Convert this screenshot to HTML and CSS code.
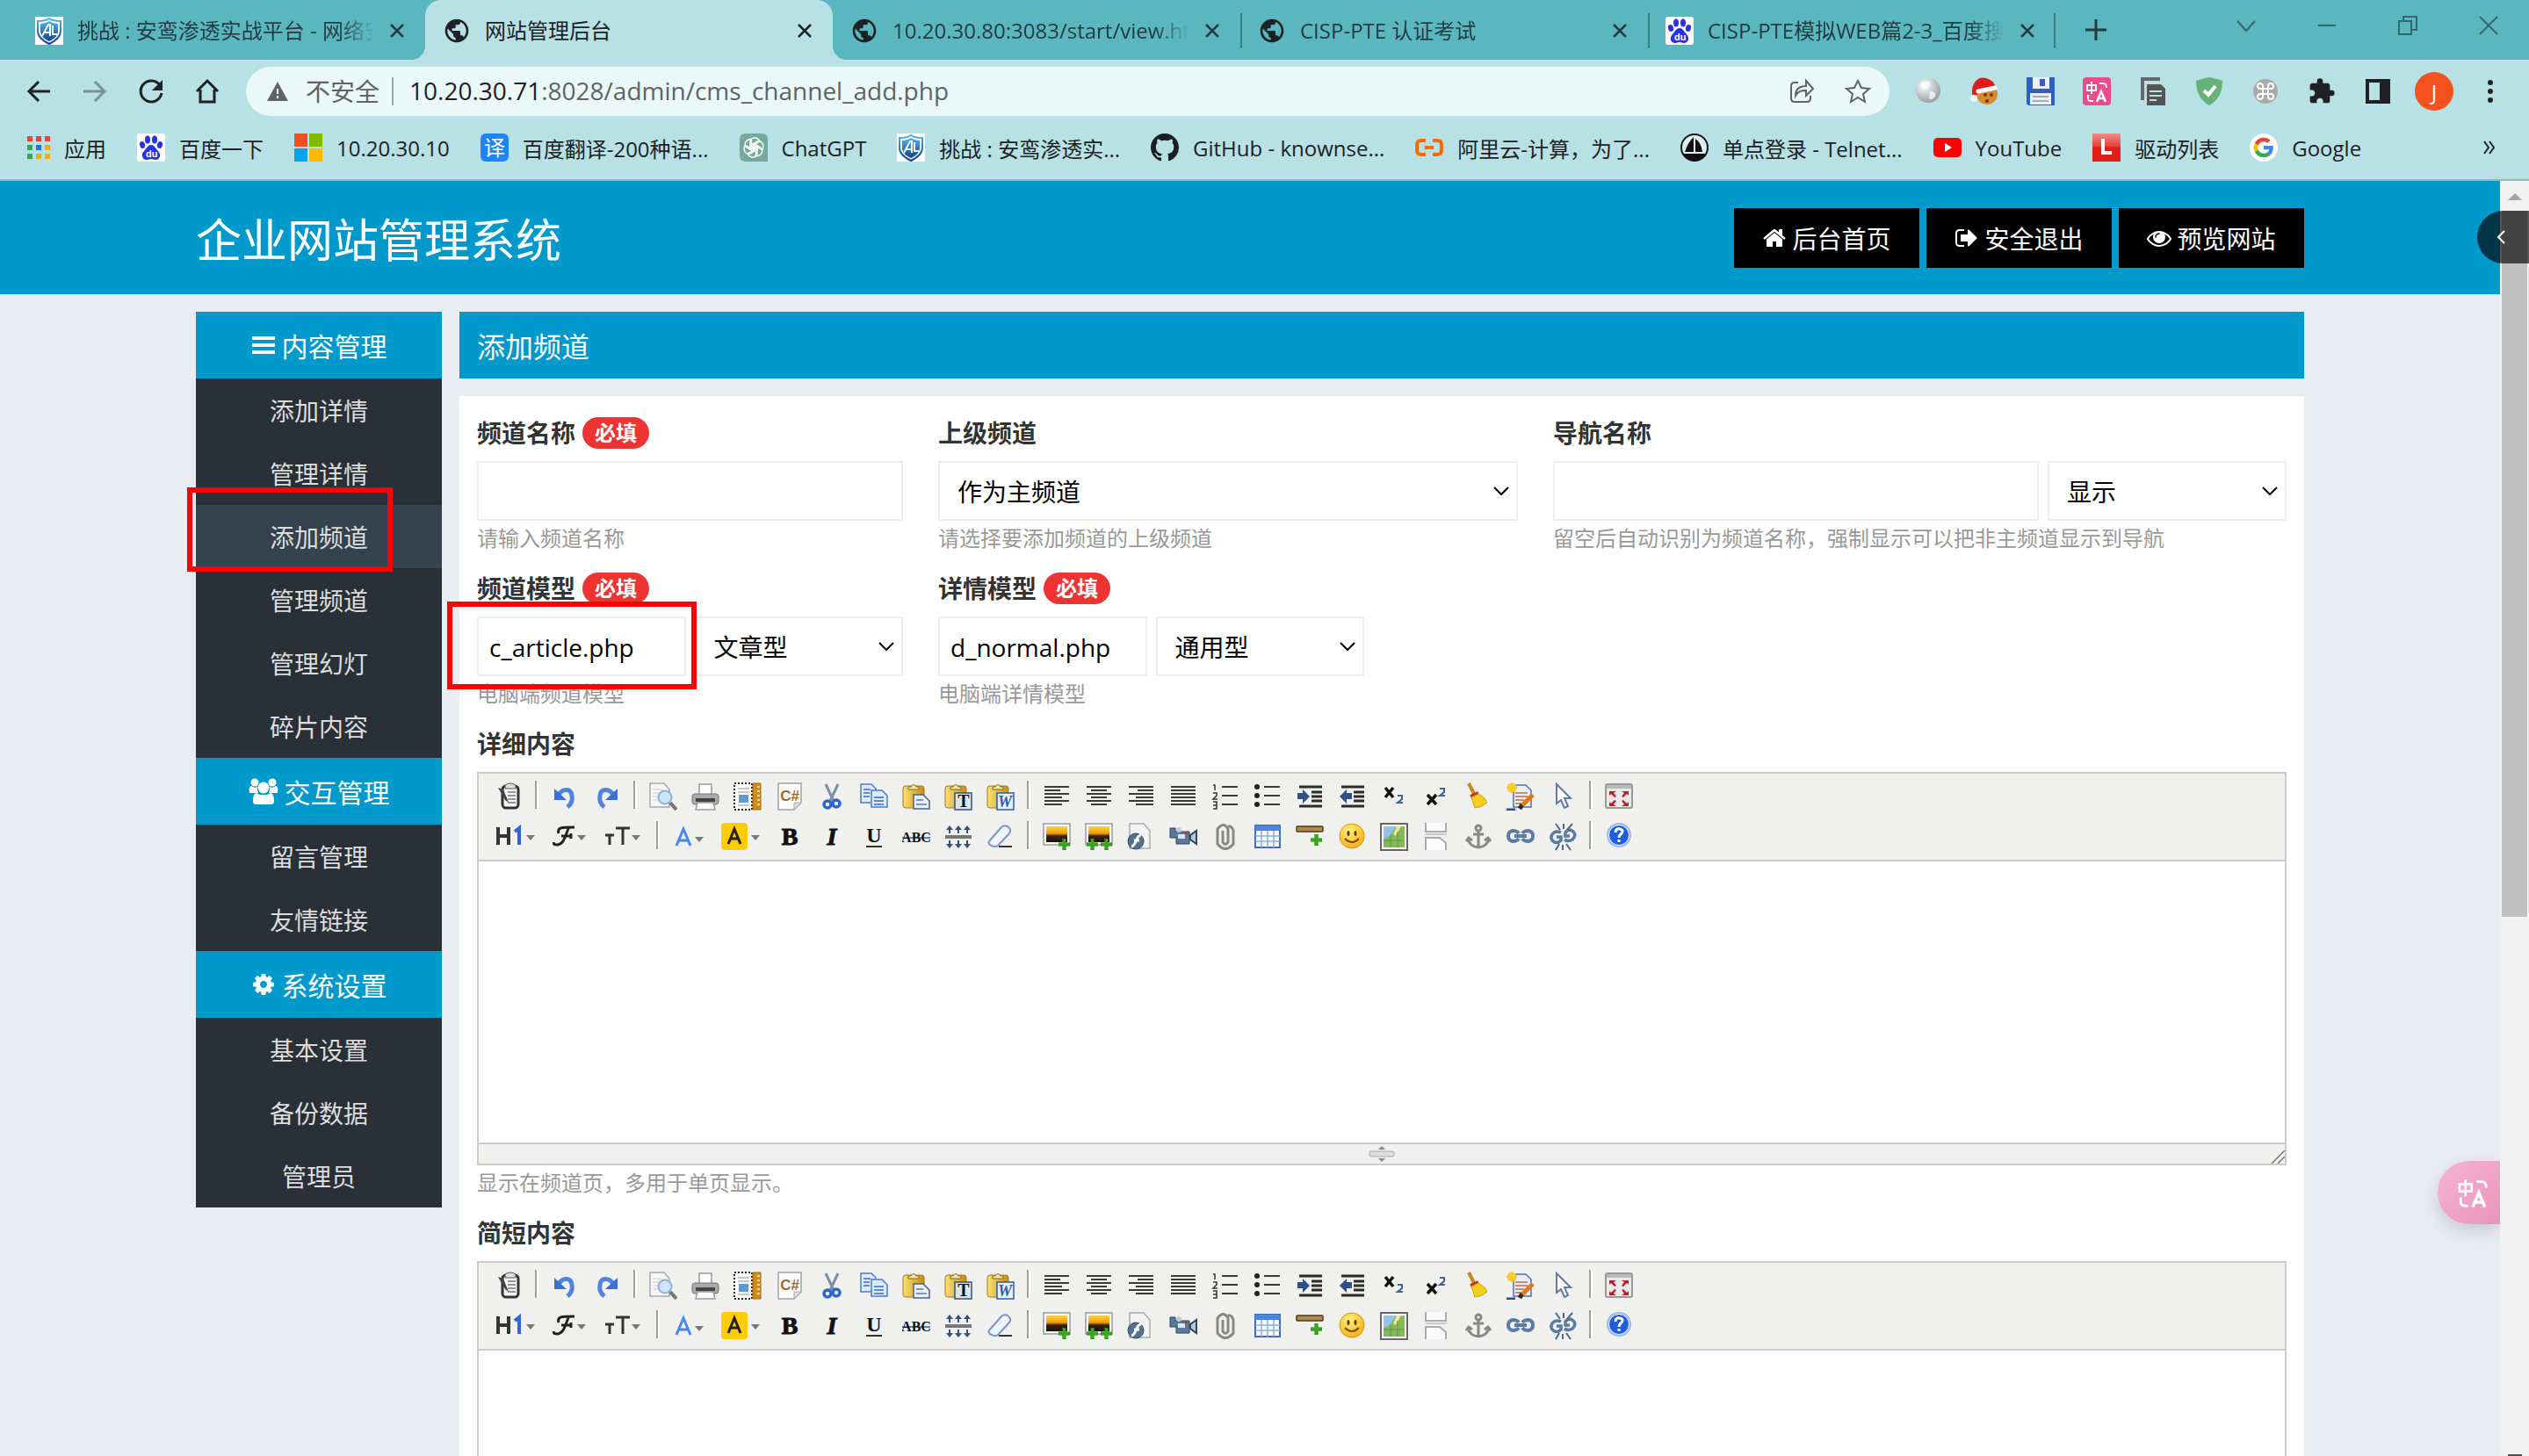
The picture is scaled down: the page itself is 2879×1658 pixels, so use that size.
FILE: index.html
```html
<!DOCTYPE html>
<html lang="zh-CN">
<head>
<meta charset="utf-8">
<title>网站管理后台</title>
<link rel="stylesheet" href="styles.css">
</head>
<body>
<svg class="sprite" aria-hidden="true">
  <defs>
    <linearGradient id="g-blue" x1="0" y1="0" x2="0" y2="1"><stop offset="0" stop-color="#4fb4e6"/><stop offset="1" stop-color="#12408f"/></linearGradient>
    <linearGradient id="g-sky" x1="0" y1="0" x2="0" y2="1"><stop offset="0" stop-color="#ffd23c"/><stop offset=".45" stop-color="#f59a08"/><stop offset=".6" stop-color="#3b2412"/><stop offset="1" stop-color="#1c120a"/></linearGradient>
    <linearGradient id="g-clip" x1="0" y1="0" x2="1" y2="0"><stop offset="0" stop-color="#fbe27a"/><stop offset="1" stop-color="#c88a10"/></linearGradient>
    <radialGradient id="g-face" cx=".4" cy=".3" r=".8"><stop offset="0" stop-color="#fff27a"/><stop offset="1" stop-color="#f5a80c"/></radialGradient>
    <radialGradient id="g-globe" cx=".35" cy=".3" r=".8"><stop offset="0" stop-color="#fff"/><stop offset="1" stop-color="#8e9496"/></radialGradient>
    <linearGradient id="g-red" x1="0" y1="0" x2="0" y2="1"><stop offset="0" stop-color="#f08d88"/><stop offset=".45" stop-color="#e8413a"/><stop offset=".5" stop-color="#e02018"/><stop offset="1" stop-color="#e02018"/></linearGradient>
  </defs>

  <symbol id="shield-logo" viewBox="0 0 32 32"><path fill="#fff" d="M0 0h32v32H0z"/><path fill="none" stroke="url(#g-blue)" stroke-width="2" d="M16 2c4 3 8 3 13 3v11c0 7-5 11-13 15C8 27 3 23 3 16V5c5 0 9 0 13-3z"/><path fill="url(#g-blue)" d="M16 5c3 2 7 3 10 3v8c0 5-3 9-10 12C9 25 6 21 6 16V8c3 0 7-1 10-3z"/><path fill="none" stroke="#fff" stroke-width="2" d="m8 22 7-13h2v13M11 18h6m3-8v10h5"/></symbol>
  <symbol id="globe" viewBox="0 0 24 24"><path fill="#202124" d="M12 2C6.480 2 2 6.480 2 12s4.480 10 10 10 10-4.480 10-10S17.520 2 12 2zm-1 17.930c-3.950-.490-7-3.850-7-7.930 0-.620.080-1.210.210-1.790L9 15v1c0 1.100.900 2 2 2v1.930zm6.900-2.540c-.260-.810-1-1.390-1.900-1.390h-1v-3c0-.550-.450-1-1-1H8v-2h2c.550 0 1-.450 1-1V7h2c1.100 0 2-.900 2-2v-.410c2.930 1.190 5 4.060 5 7.410 0 2.080-.800 3.970-2.100 5.390z"/></symbol>
  <symbol id="baidu" viewBox="0 0 32 32"><rect width="32" height="32" rx="3" fill="#fff"/><g fill="#2932e1"><ellipse cx="12" cy="7" rx="3" ry="4.500"/><ellipse cx="20" cy="7" rx="3" ry="4.500"/><ellipse cx="6" cy="13" rx="3" ry="4" transform="rotate(-15 6 13)"/><ellipse cx="26" cy="13" rx="3" ry="4" transform="rotate(15 26 13)"/><path d="M16 13c4 0 5 4 8 7 4 4 2 10-3 10-2 0-3-1-5-1s-3 1-5 1c-5 0-7-6-3-10 3-3 4-7 8-7z"/></g></symbol>
  <symbol id="x" viewBox="0 0 20 20"><path fill="none" stroke="currentColor" stroke-width="2.500" d="m3 3 14 14M17 3 3 17"/></symbol>
  <symbol id="translate" viewBox="0 0 32 32"><g fill="none" stroke="#fff" stroke-width="2"><path d="M5 9h10v6H5zM10 5v14M19 7h4c3 0 4 1 4 5M6 20v4c0 2 1 3 4 3h2"/><path stroke-width="2.500" d="m16 28 5-12 5 12m-8-4h6"/></g></symbol>

  <symbol id="fa-home" viewBox="0 0 1792 1792"><path fill="currentColor" d="M1472 992v480q0 26-19 45t-45 19h-384v-384h-256v384h-384q-26 0-45-19t-19-45v-480q0-1 .5-3t.5-3l575-474 575 474q1 2 1 6zm223-69l-62 74q-8 9-21 11h-3q-13 0-21-7l-692-577-692 577q-12 8-24 7-13-2-21-11l-62-74q-8-10-7-23.500t11-21.500l719-599q32-26 76-26t76 26l244 204v-195q0-14 9-23t23-9h192q14 0 23 9t9 23v408l219 182q10 8 11 21.500t-7 23.500z"/></symbol>
  <symbol id="fa-out" viewBox="0 0 1792 1792"><path fill="currentColor" d="M704 1440q0 4 1 20t.5 26.500-3 23.500-10 19.500-20.500 6.500h-320q-119 0-203.500-84.500t-84.500-203.500v-704q0-119 84.500-203.500t203.500-84.500h320q13 0 22.500 9.500t9.500 22.500q0 4 1 20t.5 26.500-3 23.500-10 19.500-20.500 6.500h-320q-66 0-113 47t-47 113v704q0 66 47 113t113 47h312l11.500 1 11.500 3 8 5.500 7 9 2 13.500zm928-544q0 26-19 45l-544 544q-19 19-45 19t-45-19-19-45v-288h-448q-26 0-45-19t-19-45v-384q0-26 19-45t45-19h448v-288q0-26 19-45t45-19 45 19l544 544q19 19 19 45z"/></symbol>
  <symbol id="fa-eye" viewBox="0 0 1792 1792"><path fill="currentColor" d="M1664 960q-152-236-381-353 61 104 61 225 0 185-131.500 316.500t-316.500 131.500-316.500-131.500-131.500-316.500q0-121 61-225-229 117-381 353 133 205 333.500 326.500t434.500 121.500 434.500-121.500 333.500-326.500zm-720-384q0-20-14-34t-34-14q-125 0-214.500 89.500t-89.500 214.500q0 20 14 34t34 14 34-14 14-34q0-86 61-147t147-61q20 0 34-14t14-34zm848 384q0 34-20 69-140 230-376.500 368.500t-499.500 138.500-499.500-139-376.500-368q-20-35-20-69t20-69q140-229 376.500-368t499.500-139 499.500 139 376.500 368q20 35 20 69z"/></symbol>
  <symbol id="fa-cog" viewBox="0 0 1792 1792"><path fill="currentColor" d="M1152 896q0-106-75-181t-181-75-181 75-75 181 75 181 181 75 181-75 75-181zm512-109v222q0 12-8 23t-20 13l-185 28q-19 54-39 91 35 50 107 138 10 12 10 25t-9 23q-27 37-99 108t-94 71q-12 0-26-9l-138-108q-44 23-91 38-16 136-29 186-7 28-36 28h-222q-14 0-24.500-8.500t-11.500-21.500l-28-184q-49-16-90-37l-141 107q-10 9-25 9-14 0-25-11-126-114-165-168-7-10-7-23 0-12 8-23 15-21 51-66.500t54-70.500q-27-50-41-99l-183-27q-13-2-21-12.500t-8-23.500v-222q0-12 8-23t19-13l186-28q14-46 39-92-40-57-107-138-10-12-10-24 0-10 9-23 26-36 98.500-107.500t94.500-71.500q13 0 26 10l138 107q44-23 91-38 16-136 29-186 7-28 36-28h222q14 0 24.500 8.500t11.500 21.500l28 184q49 16 90 37l142-107q9-9 24-9 13 0 25 10 129 119 165 170 7 8 7 22 0 12-8 23-15 21-51 66.500t-54 70.500q26 50 41 98l183 28q13 2 21 12.500t8 23.500z"/></symbol>
  <symbol id="fa-bars" viewBox="0 0 28 28"><path fill="currentColor" d="M1 4h26v4H1zM1 12h26v4H1zM1 20h26v4H1z"/></symbol>
  <symbol id="fa-users" viewBox="0 0 34 30"><g fill="currentColor"><circle cx="7" cy="5" r="4.500"/><circle cx="27" cy="5" r="4.500"/><path d="M1 16c-1-3 0-7 2-7 3 2 5 2 7 1 0 3 0 5 1 7H3q-2 0-2-1zM33 16c1-3 0-7-2-7-3 2-5 2-7 1 0 3 0 5-1 7h8q2 0 2-1z"/><circle cx="17" cy="11" r="6.500"/><path d="M9 17c3 3 13 3 16 0 3 1 4 4 4 9 0 3-1 4-4 4H9c-3 0-4-1-4-4 0-5 1-8 4-9z"/></g></symbol>

  <symbol id="ke-source" viewBox="0 0 32 32"><rect x="9" y="4" width="18" height="25" rx="4" fill="#f4f4f4" stroke="#333" stroke-width="3"/><path fill="#ddd" stroke="#555" d="M12 3q6-4 12 0v4H12z"/><path stroke="#777" stroke-width="1.500" d="M15 11h9M15 15h9M15 19h9M15 23h9"/><path fill="#444" d="m4 6 6 2 6 15-4-3z"/></symbol>
  <symbol id="ke-undo" viewBox="0 0 32 32"><path fill="none" stroke="#4f83e0" stroke-width="5" d="M9 14c4-7 14-8 15 1 1 5-1 10-5 13"/><path fill="#3b6fd6" d="M4 7v13h14z"/></symbol>
  <symbol id="ke-redo" viewBox="0 0 32 32"><path fill="none" stroke="#4f83e0" stroke-width="5" d="M23 14C19 7 9 6 8 15c-1 5 1 10 5 13"/><path fill="#3b6fd6" d="M28 7v13H14z"/></symbol>
  <symbol id="ke-preview" viewBox="0 0 32 32"><path fill="#f7f7f7" stroke="#a8a8a8" stroke-width="1.500" d="M1 1h16l6 7v20H1z"/><path stroke="#ccc" d="M4 8h11M4 12h8M4 16h6M4 20h6"/><path stroke="#777" stroke-width="4" d="m24 23 7 8"/><circle cx="18" cy="17" r="7.500" fill="#cfe4fb" stroke="#8eb0dd" stroke-width="2"/></symbol>
  <symbol id="ke-print" viewBox="0 0 32 32"><path fill="#fff" stroke="#999" stroke-width="1.500" d="M9 2h14v12H9z"/><rect x="1" y="13" width="30" height="12" rx="3" fill="#a9a9a9" stroke="#777"/><path fill="#444" d="M5 18h22v4H5z"/><path fill="#fff" stroke="#999" stroke-width="1.500" d="M7 23h18l2 8H5z"/></symbol>
  <symbol id="ke-template" viewBox="0 0 32 32"><path fill="#fff" stroke="#222" stroke-width="2" stroke-dasharray="2 2" d="M1 1h20v30H1z"/><path stroke="#c8c8c8" stroke-width="2" d="M5 7h13M5 11h13M5 26h13"/><path fill="#5d9ad8" d="M6 14h11v9H6z"/><path fill="#d28a1c" stroke="#a5660a" d="M22 1h9v30h-9z"/><path stroke="#ffdf8a" stroke-width="2" d="M27 5h3M27 10h3M27 15h3M27 20h3M27 25h3"/></symbol>
  <symbol id="ke-code" viewBox="0 0 32 32"><path fill="#fbfbfb" stroke="#a2a2a2" stroke-width="1.500" d="M3 1h26v22l-8 8H3z"/><path fill="#ddd" stroke="#aaa" d="M29 23h-8v8z"/></symbol>
  <symbol id="ke-cut" viewBox="0 0 32 32"><path stroke="#7c8fa6" stroke-width="3" d="m9 2 9 19M23 2l-9 19"/><g fill="none" stroke="#2c66cc" stroke-width="3.500"><circle cx="11" cy="25" r="4"/><circle cx="21" cy="24" r="4"/></g></symbol>
  <symbol id="ke-copy" viewBox="0 0 32 32"><g fill="#dfeafc" stroke="#4a7bd0" stroke-width="1.500"><path d="M1 2h12l5 5v16H1z"/><path d="M13 9h12l6 6v13H13z"/></g><path stroke="#5c8ade" stroke-width="2" d="M4 8h8M4 12h7M4 16h7M16 17h11M16 21h11M16 25h11"/></symbol>
  <symbol id="ke-clip" viewBox="0 0 32 32"><rect x="1" y="4" width="24" height="25" rx="3" fill="url(#g-clip)" stroke="#a87810"/><path fill="#f2e3a6" stroke="#8b6b12" d="M7 8V5h3q3-5 6 0h3v3z"/></symbol>
  <symbol id="ke-paste" viewBox="0 0 32 32"><use href="#ke-clip"/><path fill="#e8eef6" stroke="#4a6288" stroke-width="1.500" d="M13 14h11l7 7v9H13z"/><path stroke="#7f94b5" stroke-width="2" d="M16 20h8M16 25h12"/></symbol>
  <symbol id="ke-plain" viewBox="0 0 32 32"><use href="#ke-clip"/><path fill="#dce4ee" stroke="#33507c" stroke-width="1.500" d="M12 12h19v19H12z"/></symbol>
  <symbol id="ke-word" viewBox="0 0 32 32"><use href="#ke-clip"/><path fill="#e6effc" stroke="#2c5cb0" stroke-width="1.500" d="M12 12h19v19H12z"/></symbol>
  <symbol id="ke-left" viewBox="0 0 32 32"><path stroke="#3a3a3a" stroke-width="2" d="M2 5h28M2 9h18M2 13h28M2 17h20M2 21h28M2 25h20"/></symbol>
  <symbol id="ke-center" viewBox="0 0 32 32"><path stroke="#3a3a3a" stroke-width="2" d="M2 5h28M7 9h18M2 13h28M7 17h18M2 21h28M7 25h18"/></symbol>
  <symbol id="ke-right" viewBox="0 0 32 32"><path stroke="#3a3a3a" stroke-width="2" d="M2 5h28M12 9h18M2 13h28M10 17h20M2 21h28M10 25h20"/></symbol>
  <symbol id="ke-full" viewBox="0 0 32 32"><path stroke="#3a3a3a" stroke-width="2" d="M2 5h28M2 9h28M2 13h28M2 17h28M2 21h28M2 25h28"/></symbol>
  <symbol id="ke-ol" viewBox="0 0 32 32"><path stroke="#3a3a3a" stroke-width="2" d="M12 5h18M12 15h18M12 25h18"/><path fill="none" stroke="#333" stroke-width="1.500" d="M2 3h2v6M2 12h4v3l-4 4h5M2 22h4v8H2m0-4h4"/></symbol>
  <symbol id="ke-ul" viewBox="0 0 32 32"><path stroke="#3a3a3a" stroke-width="2" d="M12 5h18M12 15h18M12 25h18"/><g fill="#222"><circle cx="4" cy="5" r="3"/><circle cx="4" cy="15" r="3"/><circle cx="4" cy="25" r="3"/></g></symbol>
  <symbol id="ke-indent" viewBox="0 0 32 32"><path stroke="#2a2a2a" stroke-width="3" d="M4 5h26M18 11h12M18 16h12M18 21h12M4 27h26"/><path fill="#2f4f86" d="M2 12h6V8l8 8-8 8v-5H2z"/></symbol>
  <symbol id="ke-outdent" viewBox="0 0 32 32"><path stroke="#2a2a2a" stroke-width="3" d="M4 5h26M18 11h12M18 16h12M18 21h12M4 27h26"/><path fill="#2f4f86" d="M16 12h-6V8l-8 8 8 8v-5h6z"/></symbol>
  <symbol id="ke-sub" viewBox="0 0 32 32"><path stroke="#111" stroke-width="3.500" d="m6 6 9 11M15 6 6 17"/><path fill="none" stroke="#3d62a0" stroke-width="2" d="M20 15h5v4l-5 4h6"/></symbol>
  <symbol id="ke-sup" viewBox="0 0 32 32"><path stroke="#111" stroke-width="3.500" d="m6 14 10 11M16 14 6 25"/><path fill="none" stroke="#3d62a0" stroke-width="2" d="M20 7h5v4l-5 4h6"/></symbol>
  <symbol id="ke-broom" viewBox="0 0 32 32"><path stroke="#c58a1a" stroke-width="4" d="m5 1 6 12"/><path stroke="#cf2a1c" stroke-width="4" d="m7 16 9-4"/><path fill="#f3cf1c" stroke="#c9a20c" d="m8 17 8-4q8 4 10 10-7 6-14 6z"/></symbol>
  <symbol id="ke-format" viewBox="0 0 32 32"><path fill="#e6eefb" stroke="#4a73b4" stroke-width="1.500" d="M8 3h14l6 6v19H8z"/><path stroke="#d08a64" stroke-width="2" d="M10 12h14M10 16h14M10 20h10M10 24h8"/><path stroke="#f7cd1f" stroke-width="3" d="M0 6h12M6 0v12M2 2l8 8M10 2l-8 8"/><path stroke="#2b2b2b" stroke-width="5" d="m15 30 3-5"/><path stroke="#e2771c" stroke-width="5" d="m18 26 12-12"/><path stroke="#2b4f8c" stroke-width="3" d="M0 31h10"/></symbol>
  <symbol id="ke-select" viewBox="0 0 32 32"><path fill="#fff" stroke="#6079a8" stroke-width="2" d="M9 2v22l5-4 4 9 4-2-4-9h7z"/></symbol>
  <symbol id="ke-max" viewBox="0 0 32 32"><rect x="1" y="2" width="30" height="27" rx="2" fill="#e9e9e9" stroke="#999" stroke-width="2"/><path fill="#bbb" d="M2 3h28v4H2z"/><path fill="#b8202a" d="M5 10h8l-3 2 3 4-2 1-4-4-2 2zM27 10h-8l3 2-3 4 2 1 4-4 2 2zM5 27h8l-3-2 3-4-2-1-4 4-2-2zM27 27h-8l3-2-3-4 2-1 4 4 2-2z"/></symbol>
  <symbol id="ke-drop" viewBox="0 0 10 6"><path fill="#777" d="M0 0h10L5 6z"/></symbol>
  <symbol id="ke-h1" viewBox="0 0 50 32"><path fill="none" stroke="#333" stroke-width="4" d="M4 5v20M16 5v20M4 15h12"/><path fill="none" stroke="#2b66da" stroke-width="4" d="M28 25V6l-5 4"/><use href="#ke-drop" x="36" y="14" width="10" height="6"/></symbol>
  <symbol id="ke-font" viewBox="0 0 42 32"><path fill="none" stroke="#222" stroke-width="3" d="M7 12C5 5 10 5 25 5M19 5c-4 6-5 20-14 20q-4 0-4-3M10 15h11m0-3v6"/><use href="#ke-drop" x="28" y="14" width="10" height="6"/></symbol>
  <symbol id="ke-size" viewBox="0 0 46 32"><path fill="none" stroke="#333" stroke-width="3" d="M2 14h10M7 14v11M14 6h16M22 6v19"/><use href="#ke-drop" x="32" y="14" width="10" height="6"/></symbol>
  <symbol id="ke-color" viewBox="0 0 40 32"><path fill="none" stroke="#4688f0" stroke-width="3" d="m5 26 8-19 8 19M8 20h10"/><use href="#ke-drop" x="26" y="16" width="10" height="6"/></symbol>
  <symbol id="ke-hilite" viewBox="0 0 46 32"><rect width="30" height="31" rx="4" fill="#fc0"/><path fill="none" stroke="#222" stroke-width="3" d="m8 24 7-17 7 17M10 18h10"/><use href="#ke-drop" x="34" y="14" width="10" height="6"/></symbol>
  <symbol id="ke-under" viewBox="0 0 32 32"><path stroke="#333" stroke-width="2" d="M7 27h18"/></symbol>
  <symbol id="ke-strike" viewBox="0 0 32 32"><path stroke="#2f5ea8" stroke-width="1.500" d="M0 17h32"/></symbol>
  <symbol id="ke-line" viewBox="0 0 32 32"><path stroke="#777" stroke-width="4" d="M1 16h30"/><path fill="none" stroke="#35527f" stroke-width="2" d="M6 12V5M16 12V5M26 12V5M6 20v7M16 20v7M26 20v7"/><path fill="#35527f" d="m2 8 4-5 4 5zM12 8l4-5 4 5zM22 8l4-5 4 5zM2 24l4 5 4-5zM12 24l4 5 4-5zM22 24l4 5 4-5z"/></symbol>
  <symbol id="ke-eraser" viewBox="0 0 32 32"><path fill="#eef4fc" stroke="#7b96bf" stroke-width="2" d="M3 21 17 5q3-3 7-1 5 4 2 8L13 26q-3 2-7 0-5-2-3-5z"/><path stroke="#333" stroke-width="2" d="M14 27h15"/></symbol>
  <symbol id="ke-plus" viewBox="0 0 14 14"><path fill="#35a81e" stroke="#1c7a10" stroke-width=".500" d="M5 0h4v5h5v4H9v5H5V9H0V5h5z"/></symbol>
  <symbol id="ke-image" viewBox="0 0 32 32"><path fill="#fff" stroke="#999" stroke-width="1.500" d="M1 1h30v24H1z"/><path fill="url(#g-sky)" d="M4 4h24v18H4z"/><use href="#ke-plus" x="18" y="18" width="13" height="13"/></symbol>
  <symbol id="ke-images" viewBox="0 0 32 32"><path fill="#fff" stroke="#999" stroke-width="1.500" d="M1 1h30v24H1z"/><path fill="url(#g-sky)" d="M4 4h24v18H4z"/><use href="#ke-plus" x="2" y="18" width="13" height="13"/><use href="#ke-plus" x="18" y="18" width="13" height="13"/></symbol>
  <symbol id="ke-flash" viewBox="0 0 32 32"><path fill="#f3f3f3" stroke="#aaa" stroke-width="1.500" d="M3 1h16l7 8v20H3z"/><circle cx="10" cy="21" r="9" fill="#52718f" stroke="#2d4964"/><path fill="none" stroke="#fff" stroke-width="3" d="M16 14c-6 0-5 12-11 13M8 20h6"/></symbol>
  <symbol id="ke-media" viewBox="0 0 32 32"><path fill="#58789c" stroke="#2c4660" d="M1 6h6v4h16v14H8v-7H1z"/><path fill="#dbe6f1" d="M10 13h8v5h-8z"/><circle cx="11" cy="8" r="3" fill="#bcd"/><path fill="#b7c8da" stroke="#2c4660" stroke-width="2" d="m24 14 7-5v15l-7-5z"/><circle cx="19" cy="12" r="1.500" fill="#d22"/></symbol>
  <symbol id="ke-file" viewBox="0 0 32 32"><path fill="none" stroke="#888" stroke-width="3" d="M13 9v13q3 5 6 0V7q-5-9-12 0v17q9 11 18 0V9q-2-6-6-5"/></symbol>
  <symbol id="ke-table" viewBox="0 0 32 32"><path fill="#f5f9ff" stroke="#3f6cb8" stroke-width="2" d="M2 3h28v25H2z"/><path fill="#4d84e2" d="M2 3h28v6H2z"/><path stroke="#8fadd8" stroke-width="1.500" d="M2 15h28M2 21h28M9 9v19M16 9v19M23 9v19"/></symbol>
  <symbol id="ke-hr" viewBox="0 0 32 32"><rect x="1" y="4" width="30" height="6" rx="1" fill="#b08a4e" stroke="#4e3a18" stroke-width="1.500"/><use href="#ke-plus" x="17" y="13" width="13" height="13"/></symbol>
  <symbol id="ke-smile" viewBox="0 0 32 32"><circle cx="16" cy="15" r="14" fill="url(#g-face)" stroke="#d8920a"/><ellipse cx="12" cy="12" rx="1.500" ry="3" fill="#5a3a00"/><ellipse cx="20" cy="12" rx="1.500" ry="3" fill="#5a3a00"/><path fill="none" stroke="#7a4a00" stroke-width="2" d="M8 18q8 8 16 0"/></symbol>
  <symbol id="ke-map" viewBox="0 0 32 32"><path fill="#fff" stroke="#666" stroke-width="2" d="M1 1h30v30H1z"/><path fill="#8fc4f0" d="M4 4h24v24H4z"/><path fill="#86b95c" d="m4 18 7-3 6-9 11-2v24H4z"/><path fill="#f0e58a" d="m15 13 4-9h5l-6 11z"/><path stroke="#5d8f3c" d="M4 20h24M12 14v14M20 10v18"/></symbol>
  <symbol id="ke-break" viewBox="0 0 32 32"><path fill="#fafafa" stroke="#aaa" stroke-width="2" d="M4 0v10h23V0M4 31V17h16l7 6v8"/><path stroke="#c9c9c9" stroke-width="2" d="M4 13h24"/></symbol>
  <symbol id="ke-anchor" viewBox="0 0 32 32"><g fill="none" stroke="#888" stroke-width="3"><circle cx="16" cy="6" r="3"/><path d="M16 9v18M10 13h12M4 18q2 9 12 10 10-1 12-10M2 21l3-4 4 3M23 20l4-3 3 4"/></g></symbol>
  <symbol id="ke-link" viewBox="0 0 32 32"><g fill="none" stroke="#5c7ba2" stroke-width="4"><path d="M14 12q-2-3-7-3-5 1-5 6t5 6q5 0 7-3M18 12q2-3 7-3 5 1 5 6t-5 6q-5 0-7-3M9 15h14"/></g></symbol>
  <symbol id="ke-unlink" viewBox="0 0 32 32"><g fill="none" stroke="#5c7ba2" stroke-width="3.500"><path d="M14 11q-4-2-8 0-5 4-2 9 5 5 10 0v-4H9M18 19q4 3 9 0 5-5 1-9-5-4-9 1v4h5"/></g><path stroke="#4c6788" stroke-width="2" d="m13 8-5-7M17 7V1M21 8l6-7M12 24l-4 7M16 25v6M20 24l5 7"/></symbol>
  <symbol id="ke-about" viewBox="0 0 32 32"><circle cx="16" cy="14" r="14" fill="#9db9ee"/><circle cx="16" cy="14" r="11.500" fill="#1f5ce0" stroke="#fff"/><path fill="none" stroke="#fff" stroke-width="3" d="M12 11q0-5 5-4 5 1 2 5-3 2-3 5M16 19v3"/></symbol>
</svg>

<div class="window">
  <header class="chrome">
    <div class="tabs">
      <div class="tab"><svg class="ico32"><use href="#shield-logo"/></svg><span class="tab-title">挑战 : 安鸾渗透实战平台 - 网络安全</span><button class="close" aria-label="关闭"><svg><use href="#x"/></svg></button></div>
      <div class="tab tab-active"><svg class="ico32"><use href="#globe"/></svg><span class="tab-title">网站管理后台</span><button class="close" aria-label="关闭"><svg><use href="#x"/></svg></button></div>
      <div class="tab"><svg class="ico32"><use href="#globe"/></svg><span class="tab-title">10.20.30.80:3083/start/view.html</span><button class="close" aria-label="关闭"><svg><use href="#x"/></svg></button></div>
      <div class="tab tab-split"><svg class="ico32"><use href="#globe"/></svg><span class="tab-title">CISP-PTE 认证考试</span><button class="close" aria-label="关闭"><svg><use href="#x"/></svg></button></div>
      <div class="tab tab-split tab-last"><svg class="ico32" viewBox="0 0 32 32"><use href="#baidu"/><text class="du" x="10" y="27">du</text></svg><span class="tab-title">CISP-PTE模拟WEB篇2-3_百度搜索</span><button class="close" aria-label="关闭"><svg><use href="#x"/></svg></button></div>
      <button class="new-tab" aria-label="新标签页"><svg viewBox="0 0 24 24"><path stroke="#243c40" stroke-width="3" d="M12 0v24M0 12h24"/></svg></button>
      <div class="controls">
        <button aria-label="搜索标签页"><svg viewBox="0 0 22 22"><path d="m1 6 10 11L21 6"/></svg></button>
        <button aria-label="最小化"><svg viewBox="0 0 22 22"><path d="M1 11h20"/></svg></button>
        <button aria-label="还原"><svg viewBox="0 0 22 22"><path d="M1 6h14v15H1zM6 6V1h15v15h-6"/></svg></button>
        <button aria-label="关闭窗口"><svg viewBox="0 0 22 22"><path d="m1 1 20 20M21 1 1 21"/></svg></button>
      </div>
    </div>

    <div class="toolbar">
      <div class="nav">
        <button aria-label="后退"><svg viewBox="0 0 32 32"><path d="M29 16H5M16 5 5 16l11 11"/></svg></button>
        <button aria-label="前进" disabled><svg viewBox="0 0 32 32"><path d="M3 16h24M16 5l11 11-11 11"/></svg></button>
        <button aria-label="重新加载"><svg viewBox="0 0 32 32"><path d="M26 9a12 12 0 1 0 2 9"/><path class="solid" d="M29 3v12H17z"/></svg></button>
        <button aria-label="主页"><svg viewBox="0 0 32 32"><path d="M4 16 16 4l12 12M8 14v14h16V14"/></svg></button>
      </div>
      <div class="address">
        <svg class="warn" viewBox="0 0 24 22"><path fill="#5f6368" d="M12 0 24 22H0z"/><path stroke="#fff" stroke-width="2" d="M12 8v6M12 16v3"/></svg>
        <span class="insecure">不安全</span>
        <span class="url"><b>10.20.30.71</b>:8028/admin/cms_channel_add.php</span>
        <button aria-label="分享"><svg viewBox="0 0 32 32"><path d="M12 6H8q-4 0-4 4v14q0 4 4 4h14q4 0 4-4v-3M9 21c0-8 5-11 12-11V4l8 9-8 8v-6c-6 0-9 1-12 6z"/></svg></button>
        <button aria-label="收藏"><svg viewBox="0 0 32 32"><path d="m16 4 4 8 9 1-7 6 2 9-8-5-8 5 2-9-7-6 9-1z"/></svg></button>
      </div>
      <div class="extensions">
        <button aria-label="代理"><svg viewBox="0 0 32 32"><circle cx="16" cy="15" r="14" fill="url(#g-globe)"/><path fill="#fff" opacity=".7" d="M8 6q8-4 10 2-2 6-7 5-4-3-3-7zM18 16q7-1 6 6-4 5-7 2z"/></svg></button>
        <button aria-label="Cookie"><svg viewBox="0 0 32 32"><circle cx="19" cy="19" r="12" fill="#d98a2e"/><g fill="#6b3a10"><circle cx="17" cy="20" r="2"/><circle cx="24" cy="20" r="2"/><circle cx="19" cy="27" r="2"/></g><path fill="#e01b1b" d="M3 24C-1 8 8-2 18 1q8 2 11 10l-19 6z"/><path stroke="#fff" stroke-width="5" stroke-linecap="round" d="m9 16 19-4"/><circle cx="4" cy="24" r="4" fill="#eee"/></svg></button>
        <button aria-label="保存"><svg viewBox="0 0 32 32"><path fill="#2f5fc4" d="M0 0h32v32H2l-2-2z"/><path fill="#e9eef8" d="M7 0h19v13H7zM4 18h24v13H4z"/><path fill="#2f5fc4" d="M15 2h6v8h-6z"/><path stroke="#aaa" stroke-width="2" d="M7 22h18M7 27h18"/></svg></button>
        <button aria-label="翻译"><svg viewBox="0 0 32 32"><rect width="32" height="32" rx="4" fill="#ec4c8b"/><use href="#translate"/></svg></button>
        <button aria-label="阅读列表"><svg viewBox="0 0 32 32"><path fill="none" stroke="#666" stroke-width="4" d="M4 26V2h20"/><path fill="#555" d="M9 8h16l5 5v19H9z"/><path stroke="#b7e1e4" stroke-width="2" d="M12 16h14M12 21h14M12 26h8"/></svg></button>
        <button aria-label="防护"><svg viewBox="0 0 32 32"><path fill="#67b279" d="M16 0c5 1 10 2 15 4 0 14-5 22-15 28C6 26 1 18 1 4c5-2 10-3 15-4z"/><path fill="none" stroke="#fff" stroke-width="4" d="m10 15 5 5 8-10"/></svg></button>
        <button aria-label="快捷键"><svg viewBox="0 0 32 32"><circle cx="16" cy="16" r="14" fill="#aaa"/><path fill="none" stroke="#fff" stroke-width="2" d="M13 13h6v6h-6zM13 13h-3a3 3 0 1 1 3-3zM19 13v-3a3 3 0 1 1 3 3zM19 19h3a3 3 0 1 1-3 3zM13 19v3a3 3 0 1 1-3-3z"/></svg></button>
        <button aria-label="扩展程序"><svg viewBox="0 0 24 24"><path fill="#202124" d="M20.500 11H19V7c0-1.100-.9-2-2-2h-4V3.500a2.500 2.500 0 0 0-5 0V5H4c-1.100 0-2 .9-2 2v3.800h1.500a2.700 2.700 0 0 1 0 5.400H2V20c0 1.100.9 2 2 2h3.800v-1.500a2.700 2.700 0 0 1 5.400 0V22H17c1.100 0 2-.9 2-2v-4h1.500a2.500 2.500 0 0 0 0-5z"/></svg></button>
        <button aria-label="侧边栏"><svg viewBox="0 0 32 32"><path fill="#202124" d="M2 2h28v28H2z"/><path fill="#b7e1e4" d="M6 6h12v20H6z"/></svg></button>
        <button class="avatar" aria-label="账户">J</button>
        <button aria-label="菜单"><svg viewBox="0 0 32 32"><g fill="#202124"><circle cx="16" cy="6" r="3"/><circle cx="16" cy="16" r="3"/><circle cx="16" cy="26" r="3"/></g></svg></button>
      </div>
    </div>

    <nav class="bookmarks">
      <a href="#"><svg class="apps" viewBox="0 0 26 26"><path fill="#ea4335" d="M0 0h6v6H0zM10 0h6v6h-6zM20 0h6v6h-6z"/><path fill="#34a853" d="M0 10h6v6H0zM0 20h6v6H0z"/><path fill="#1a73e8" d="M10 10h6v6h-6z"/><path fill="#f9ab00" d="M20 10h6v6h-6zM10 20h6v6h-6zM20 20h6v6h-6z"/></svg>应用</a>
      <a href="#"><svg class="ico32" viewBox="0 0 32 32"><use href="#baidu"/><text class="du" x="10" y="27">du</text></svg>百度一下</a>
      <a href="#"><svg class="ico32" viewBox="0 0 32 32"><path fill="#f25022" d="M0 0h15v15H0z"/><path fill="#7fba00" d="M17 0h15v15H17z"/><path fill="#00a4ef" d="M0 17h15v15H0z"/><path fill="#ffb900" d="M17 17h15v15H17z"/></svg>10.20.30.10</a>
      <a href="#"><svg class="ico32" viewBox="0 0 32 32"><rect width="32" height="32" rx="6" fill="#1f85f5"/><text x="4" y="25" font-size="24" fill="#fff">译</text></svg>百度翻译-200种语...</a>
      <a href="#"><svg class="ico32" viewBox="0 0 32 32"><path fill="#74aa9c" d="M7 0h18q7 0 7 7v25H7q-7 0-7-7V7q0-7 7-7z"/><g fill="none" stroke="#fff" stroke-width="1.500"><path id="petal" d="M12 17V9q1-4 5-4t6 4l-7 4v8"/><use href="#petal" transform="rotate(60 16 16)"/><use href="#petal" transform="rotate(120 16 16)"/><use href="#petal" transform="rotate(180 16 16)"/><use href="#petal" transform="rotate(240 16 16)"/><use href="#petal" transform="rotate(300 16 16)"/></g></svg>ChatGPT</a>
      <a href="#"><svg class="ico32"><use href="#shield-logo"/></svg>挑战 : 安鸾渗透实...</a>
      <a href="#"><svg class="ico32" viewBox="0 0 16 16"><path fill="#1b1f23" d="M8 0C3.580 0 0 3.580 0 8c0 3.540 2.290 6.530 5.470 7.590.4.070.55-.17.55-.38 0-.19-.01-.82-.01-1.490-2.010.37-2.530-.49-2.690-.94-.09-.23-.48-.94-.82-1.130-.28-.15-.68-.52-.01-.53.63-.01 1.080.58 1.230.82.72 1.210 1.870.87 2.330.66.07-.52.28-.87.51-1.070-1.780-.2-3.640-.89-3.640-3.950 0-.87.31-1.590.82-2.150-.08-.2-.36-1.020.08-2.120 0 0 .67-.21 2.200.82.64-.18 1.320-.27 2-.27s1.360.09 2 .27c1.530-1.040 2.200-.82 2.200-.82.44 1.100.16 1.920.08 2.120.51.56.82 1.270.82 2.150 0 3.070-1.870 3.750-3.650 3.950.29.25.54.73.54 1.480 0 1.070-.01 1.930-.01 2.200 0 .21.15.46.55.38A8 8 0 0 0 16 8c0-4.420-3.580-8-8-8z"/></svg>GitHub - knownse...</a>
      <a href="#"><svg class="ico32" viewBox="0 0 32 32"><path fill="none" stroke="#ff6a00" stroke-width="4" d="M12 8H7q-5 0-5 5v6q0 5 5 5h5M20 8h5q5 0 5 5v6q0 5-5 5h-5M11 16h10"/></svg>阿里云-计算，为了...</a>
      <a href="#"><svg class="ico32" viewBox="0 0 32 32"><circle cx="16" cy="16" r="15" fill="#dfeff0" stroke="#111" stroke-width="2"/><path fill="#111" d="M15 4v17H5q3-10 10-17zM17 6q7 5 8 15h-8zM3 23h26q-4 8-13 8T3 23z"/></svg>单点登录 - Telnet...</a>
      <a href="#"><svg class="ico32" viewBox="0 0 32 32"><rect y="5" width="32" height="22" rx="5" fill="#f00"/><path fill="#fff" d="m13 11 8 5-8 5z"/></svg>YouTube</a>
      <a href="#"><svg class="ico32" viewBox="0 0 32 32"><path fill="url(#g-red)" d="M0 0h32v32H0z"/><path fill="none" stroke="#fff" stroke-width="4" d="M12 6v16h10"/></svg>驱动列表</a>
      <a href="#"><svg class="ico32" viewBox="-10 -10 68 68"><circle cx="24" cy="24" r="34" fill="#fff"/><path fill="#ea4335" d="M24 9.500c3.540 0 6.710 1.220 9.210 3.600l6.850-6.850C35.900 2.380 30.470 0 24 0 14.620 0 6.510 5.380 2.560 13.220l7.980 6.190C12.430 13.720 17.740 9.500 24 9.500z"/><path fill="#4285f4" d="M46.980 24.550c0-1.570-.15-3.090-.38-4.550H24v9.020h12.940c-.58 2.960-2.260 5.480-4.780 7.180l7.730 6c4.510-4.180 7.090-10.360 7.090-17.650z"/><path fill="#fbbc05" d="M10.530 28.590c-.48-1.450-.76-2.990-.76-4.590s.27-3.140.76-4.590l-7.980-6.190C.92 16.460 0 20.120 0 24s.92 7.540 2.560 10.780l7.970-6.190z"/><path fill="#34a853" d="M24 48c6.480 0 11.930-2.130 15.890-5.810l-7.730-6c-2.150 1.450-4.920 2.300-8.160 2.300-6.260 0-11.570-4.220-13.470-9.910l-7.980 6.190C6.510 42.620 14.620 48 24 48z"/></svg>Google</a>
      <button class="more" aria-label="更多书签"><svg viewBox="0 0 14 16"><path d="m1 1 5 7-5 7M7 1l5 7-5 7"/></svg></button>
    </nav>
  </header>

  <div class="viewport">
    <div class="page">
      <div class="masthead">
        <div class="container masthead-row">
          <h1>企业网站管理系统</h1>
          <div class="actions">
            <a href="#"><svg><use href="#fa-home"/></svg>后台首页</a>
            <a href="#"><svg><use href="#fa-out"/></svg>安全退出</a>
            <a href="#"><svg><use href="#fa-eye"/></svg>预览网站</a>
          </div>
        </div>
      </div>

      <div class="container columns">
        <nav class="sidebar">
          <h2><svg><use href="#fa-bars"/></svg>内容管理</h2>
          <a href="#">添加详情</a>
          <a href="#">管理详情</a>
          <a href="#" class="current">添加频道<i class="mark mark-menu"></i></a>
          <a href="#">管理频道</a>
          <a href="#">管理幻灯</a>
          <a href="#">碎片内容</a>
          <h2><svg class="wide"><use href="#fa-users"/></svg>交互管理</h2>
          <a href="#">留言管理</a>
          <a href="#">友情链接</a>
          <h2><svg><use href="#fa-cog"/></svg>系统设置</h2>
          <a href="#">基本设置</a>
          <a href="#">备份数据</a>
          <a href="#">管理员</a>
        </nav>

        <main class="main">
          <h2 class="panel-title">添加频道</h2>
          <form class="panel">
            <div class="field span3">
              <label for="c-name">频道名称<span class="badge">必填</span></label>
              <input id="c-name" type="text">
              <p>请输入频道名称</p>
            </div>
            <div class="field span4">
              <label for="c-parent">上级频道</label>
              <select id="c-parent"><option>作为主频道</option></select>
              <p>请选择要添加频道的上级频道</p>
            </div>
            <div class="field span5">
              <label for="c-nav">导航名称</label>
              <div class="pair pair-nav"><input id="c-nav" type="text"><select aria-label="导航显示"><option>显示</option></select></div>
              <p>留空后自动识别为频道名称，强制显示可以把非主频道显示到导航</p>
            </div>
            <div class="field span3">
              <label for="c-model">频道模型<span class="badge">必填</span></label>
              <div class="pair"><input id="c-model" type="text" value="c_article.php"><select aria-label="频道模型类型"><option>文章型</option></select><i class="mark mark-model"></i></div>
              <p>电脑端频道模型</p>
            </div>
            <div class="field span3">
              <label for="d-model">详情模型<span class="badge">必填</span></label>
              <div class="pair"><input id="d-model" type="text" value="d_normal.php"><select aria-label="详情模型类型"><option>通用型</option></select></div>
              <p>电脑端详情模型</p>
            </div>
            <div class="field span12">
              <label for="c-content">详细内容</label>
              <div class="editor"><div class="editor-bar"></div><textarea id="c-content"></textarea><div class="editor-status"><svg class="grip" viewBox="0 0 30 20"><path fill="#888" d="m11 5 4-4 4 4zM11 15l4 4 4-4z"/><rect x="1" y="7" width="28" height="6" rx="2" fill="#ddd" stroke="#aaa"/></svg><svg class="corner" viewBox="0 0 16 16"><path stroke="#777" stroke-width="1.500" d="M1 16 16 1M8 16l8-8"/></svg></div></div>
              <p>显示在频道页，多用于单页显示。</p>
            </div>
            <div class="field span12">
              <label for="c-brief">简短内容</label>
              <div class="editor"><div class="editor-bar"></div><textarea id="c-brief"></textarea><div class="editor-status"></div></div>
            </div>
          </form>
        </main>
      </div>
      <button class="float-translate" aria-label="翻译此页"><svg><use href="#translate"/></svg></button>
    </div>
    <div class="scrollbar">
      <svg class="arrow" viewBox="0 0 16 8"><path fill="#a3a3a3" d="M0 8 8 0l8 8z"/></svg>
      <div class="thumb"></div>
      <div class="arrow-end"></div>
    </div>
    <button class="drawer" aria-label="展开侧栏"><svg viewBox="0 0 10 16"><path d="M9 1 2 8l7 7"/></svg></button>
  </div>
</div>
<script src="editor.js"></script>
</body>
</html>
```
FILE: styles.css
```css
* { box-sizing: border-box; }
body {
  margin: 0;
  font-family: "Open Sans", "Noto Sans CJK SC", sans-serif;
  color: #333;
  background: #e9edf2;
}
button { border: 0; padding: 0; background: none; font: inherit; display: flex; align-items: center; justify-content: center; }
a { text-decoration: none; color: inherit; }
h1, h2, p { margin: 0; font-weight: 400; }
.sprite { position: absolute; width: 0; height: 0; }
.ico32 { width: 32px; height: 32px; flex: none; }
.du { font: 700 11px "Liberation Sans", sans-serif; fill: #fff; }
.window { display: flex; flex-direction: column; height: 100vh; overflow: hidden; }

/* browser frame */
.chrome { flex: none; background: #b7e1e4; border-bottom: 2px solid #9ab6ba; font-size: 24px; color: #202124; }
.tabs { display: flex; height: 68px; background: #5ab7c0; padding-left: 20px; }
.tab { position: relative; flex: 0 1 464px; min-width: 0; display: flex; align-items: center; gap: 16px; padding: 2px 22px 0 20px; color: #243c40; }
.tab-title { flex: 1; min-width: 0; overflow: hidden; white-space: nowrap; line-height: 40px; mask-image: linear-gradient(to right, #000 88%, transparent); }
.tab-active { background: #b7e1e4; border-radius: 18px 18px 0 0; color: #202124; }
.tab-active .tab-title { mask-image: none; }
.tab-active::before, .tab-active::after { content: ""; position: absolute; bottom: 0; width: 16px; height: 16px; }
.tab-active::before { right: 100%; background: radial-gradient(circle at 0 0, transparent 16px, #b7e1e4 16px); }
.tab-active::after { left: 100%; background: radial-gradient(circle at 100% 0, transparent 16px, #b7e1e4 16px); }
.tab-split::before, .tab-last::after { content: ""; position: absolute; left: 0; top: 15px; width: 2px; height: 40px; background: #3e7f86; }
.tab-last::after { left: auto; right: 0; }
.close { width: 20px; height: 20px; color: inherit; }
.close svg { width: 20px; height: 20px; }
.new-tab { width: 92px; }
.new-tab svg { width: 24px; height: 24px; }
.controls { margin-left: auto; display: flex; height: 58px; }
.controls button { width: 92px; }
.controls svg { width: 22px; height: 22px; fill: none; stroke: #34666c; stroke-width: 2; }

.toolbar { display: flex; align-items: center; height: 72px; padding: 0 12px; }
.nav { display: flex; width: 268px; }
.nav button { width: 64px; height: 56px; }
.nav svg { width: 32px; height: 32px; fill: none; stroke: #202124; stroke-width: 3; }
.nav .solid { fill: #202124; stroke: none; }
.nav button:disabled { opacity: .4; }
.address { flex: 1; display: flex; align-items: center; height: 56px; border-radius: 28px; background: #ebf8f8; padding: 0 4px 0 24px; font-size: 28px; color: #5f6368; }
.warn { width: 24px; height: 22px; margin-right: 20px; }
.insecure { line-height: 32px; padding-right: 14px; border-right: 2px solid #9aa5a7; }
.url { flex: 1; padding-left: 18px; line-height: 54px; height: 56px; white-space: nowrap; }
.url b { font-weight: 400; color: #202124; }
.address button { width: 64px; height: 56px; }
.address svg { height: 32px; fill: none; stroke: #5f6368; stroke-width: 2; }
.address .warn { height: 22px; stroke: none; }
.extensions { display: flex; padding-left: 12px; }
.extensions button { width: 64px; height: 56px; }
.extensions svg { width: 32px; height: 32px; }
.extensions .avatar { width: 44px; height: 44px; margin: 6px 10px; border-radius: 50%; background: #f4511e; color: #fff; font-size: 24px; }

.bookmarks { display: flex; align-items: center; gap: 35px; height: 64px; padding: 0 38px 8px 31px; white-space: nowrap; }
.bookmarks a { display: flex; align-items: center; gap: 16px; }
.bookmarks .apps { width: 26px; height: 26px; }
.more { margin-left: auto; }
.more svg { width: 14px; height: 16px; fill: none; stroke: #202124; stroke-width: 2; }

/* page */
.viewport { position: relative; flex: 1; min-height: 0; display: flex; }
.page { position: relative; flex: 1; min-width: 0; overflow: hidden; }
.container { max-width: 2400px; margin: 0 auto; }
.masthead { background: #09c; color: #fff; }
.masthead-row { display: flex; align-items: center; justify-content: space-between; height: 129px; }
h1 { font-size: 52px; line-height: 72px; padding-top: 4px; }
.actions { display: flex; gap: 8px; font-size: 28px; }
.actions a { display: flex; align-items: center; justify-content: center; gap: 6px; width: 211px; height: 68px; background: #000; }
.actions svg { width: 28px; height: 28px; }

.columns { display: flex; align-items: flex-start; gap: 20px; padding-top: 20px; }
.sidebar { width: 280px; flex: none; background: #2a3038; text-align: center; font-size: 28px; color: #ddd; }
.sidebar h2 { display: flex; align-items: center; justify-content: center; gap: 7px; height: 76px; background: #09c; color: #fff; font-size: 30px; }
.sidebar svg { width: 28px; height: 28px; }
.sidebar .wide { width: 34px; height: 30px; }
.sidebar a { position: relative; display: block; padding-top: 2px; line-height: 70px; }
.sidebar .current { background: #36424d; }
.mark { position: absolute; border: 6px solid #f00; pointer-events: none; z-index: 1; }
.mark-menu { left: -10px; top: -20px; width: 234px; height: 96px; }
.mark-model { left: -34px; top: -17px; width: 284px; height: 100px; }

.main { flex: 1; min-width: 0; }
.panel-title { background: #09c; color: #fff; font-size: 32px; line-height: 76px; padding: 2px 20px 0; height: 76px; }
.panel { display: grid; grid-template-columns: repeat(12, 1fr); row-gap: 15px; margin-top: 20px; padding: 20px 0; background: #fff; }
.field { padding: 0 20px; min-width: 0; }
.span3 { grid-column: span 3; }
.span4 { grid-column: span 4; }
.span5 { grid-column: span 5; }
.span12 { grid-column: 1 / -1; }
.field label { display: flex; align-items: center; gap: 8px; height: 44px; margin-bottom: 10px; font-size: 28px; line-height: 40px; font-weight: 700; }
.badge { padding: 0 14px; border-radius: 18px; background: #e33; color: #fff; font-size: 24px; line-height: 36px; }
.field p { font-size: 24px; line-height: 40px; color: #999; white-space: nowrap; }
.field input, .field select { display: block; width: 100%; min-width: 0; height: 68px; border: 2px solid #eee; border-radius: 0; background-color: #fff; padding: 2px 12px 0; font: inherit; font-size: 28px; color: #000; }
.field select { appearance: none; padding: 2px 20px 0; background-image: url("data:image/svg+xml,%3Csvg xmlns='http://www.w3.org/2000/svg' viewBox='0 0 18 12'%3E%3Cpath fill='none' stroke='%23000' stroke-width='2' d='m1 2 8 8 8-8'/%3E%3C/svg%3E"); background-repeat: no-repeat; background-size: 18px 12px; background-position: right 8px center; }
.pair { position: relative; display: grid; grid-template-columns: 1fr 1fr; gap: 10px; }
.pair-nav { grid-template-columns: 1fr 272px; }

.editor { border: 2px solid #ccc; }
.editor-bar { padding: 3px 10px; background: #f0f0ee; border-bottom: 2px solid #ccc; }
.editor-row { display: flex; align-items: center; height: 46px; }
.editor-row button { padding: 0 8px; }
.editor-row svg { height: 32px; display: block; }
.editor-row text { font-family: "Liberation Serif", serif; font-weight: 700; fill: #111; }
.editor-sep { width: 4px; height: 32px; margin: 0 6px 4px; background: #fff; border-left: 2px solid #a0a0a0; }
.w32 { width: 32px; }
.w40 { width: 40px; }
.w42 { width: 42px; }
.w46 { width: 46px; }
.w50 { width: 50px; }
.t-code text { font-family: "Liberation Sans", sans-serif; font-size: 17px; fill: #a06a2c; }
.t-plain text { font-size: 20px; }
.t-word text { font-size: 18px; font-style: italic; fill: #2c5cb0; }
.t-bold text, .t-italic text { font-size: 28px; stroke: #111; }
.t-italic text { font-style: italic; }
.t-under text { font-size: 24px; }
.t-strike text { font-size: 16px; }
.editor textarea { display: block; width: 100%; height: 320px; border: 0; padding: 8px; resize: none; font: inherit; font-size: 24px; }
.editor-status { position: relative; display: flex; justify-content: center; align-items: center; height: 24px; background: #f0f0ee; border-top: 2px solid #ccc; }
.grip { width: 30px; height: 20px; }
.corner { position: absolute; right: 0; bottom: 0; width: 16px; height: 16px; }

.float-translate { position: absolute; right: 0; top: 1116px; width: 71px; height: 72px; padding-left: 8px; border-radius: 36px 0 0 36px; background: linear-gradient(135deg, #f5b5d2, #ea94bb); box-shadow: 0 8px 20px rgba(0, 0, 0, .15); }
.float-translate svg { width: 44px; height: 44px; }
.scrollbar { flex: none; width: 33px; display: flex; flex-direction: column; align-items: center; background: #f1f1f1; padding-top: 14px; overflow: hidden; }
.arrow { width: 16px; height: 8px; flex: none; margin-bottom: 12px; }
.thumb { width: 29px; height: 804px; background: #c1c1c1; }
.arrow-end { margin-top: auto; width: 16px; height: 2px; background: #505050; }
.drawer { position: absolute; right: 0; top: 34px; width: 59px; height: 60px; padding-right: 6px; border-radius: 30px 0 0 30px; background: rgba(0, 0, 0, .65); }
.drawer svg { width: 10px; height: 16px; fill: none; stroke: #fff; stroke-width: 2; }
```
FILE: editor.js
```js
// Tool rows of the rich text editor; "|" is a separator, "name:width" a wider drop-down tool.
const rows = [
  'source | undo redo | preview print template code cut copy paste plain word | left center right full ol ul indent outdent sub sup broom format select | max',
  'h1:50 font:42 size:46 | color:40 hilite:46 bold italic under strike line eraser | image images flash media file table hr smile map break anchor link unlink | about'
];

// Letters shown on a tool: text and its baseline inside the 32px icon.
const letters = {
  code: ['C#', 16, 21], plain: ['T', 22, 28], word: ['W', 21, 28],
  bold: ['B', 16, 25], italic: ['I', 16, 25], under: ['U', 16, 22], strike: ['ABC', 16, 22]
};

document.querySelectorAll('.editor-bar').forEach(bar => {
  bar.innerHTML = rows.map(row => '<div class="editor-row">' + row.split(' ').map(item => {
    if (item === '|') return '<span class="editor-sep"></span>';
    const [name, width = 32] = item.split(':');
    const glyph = letters[name];
    const text = glyph ? `<text x="${glyph[1]}" y="${glyph[2]}" text-anchor="middle">${glyph[0]}</text>` : '';
    return `<button type="button" class="t-${name}" aria-label="${name}"><svg class="w${width}" viewBox="0 0 ${width} 32"><use href="#ke-${name}"/>${text}</svg></button>`;
  }).join('') + '</div>').join('');
});
```
